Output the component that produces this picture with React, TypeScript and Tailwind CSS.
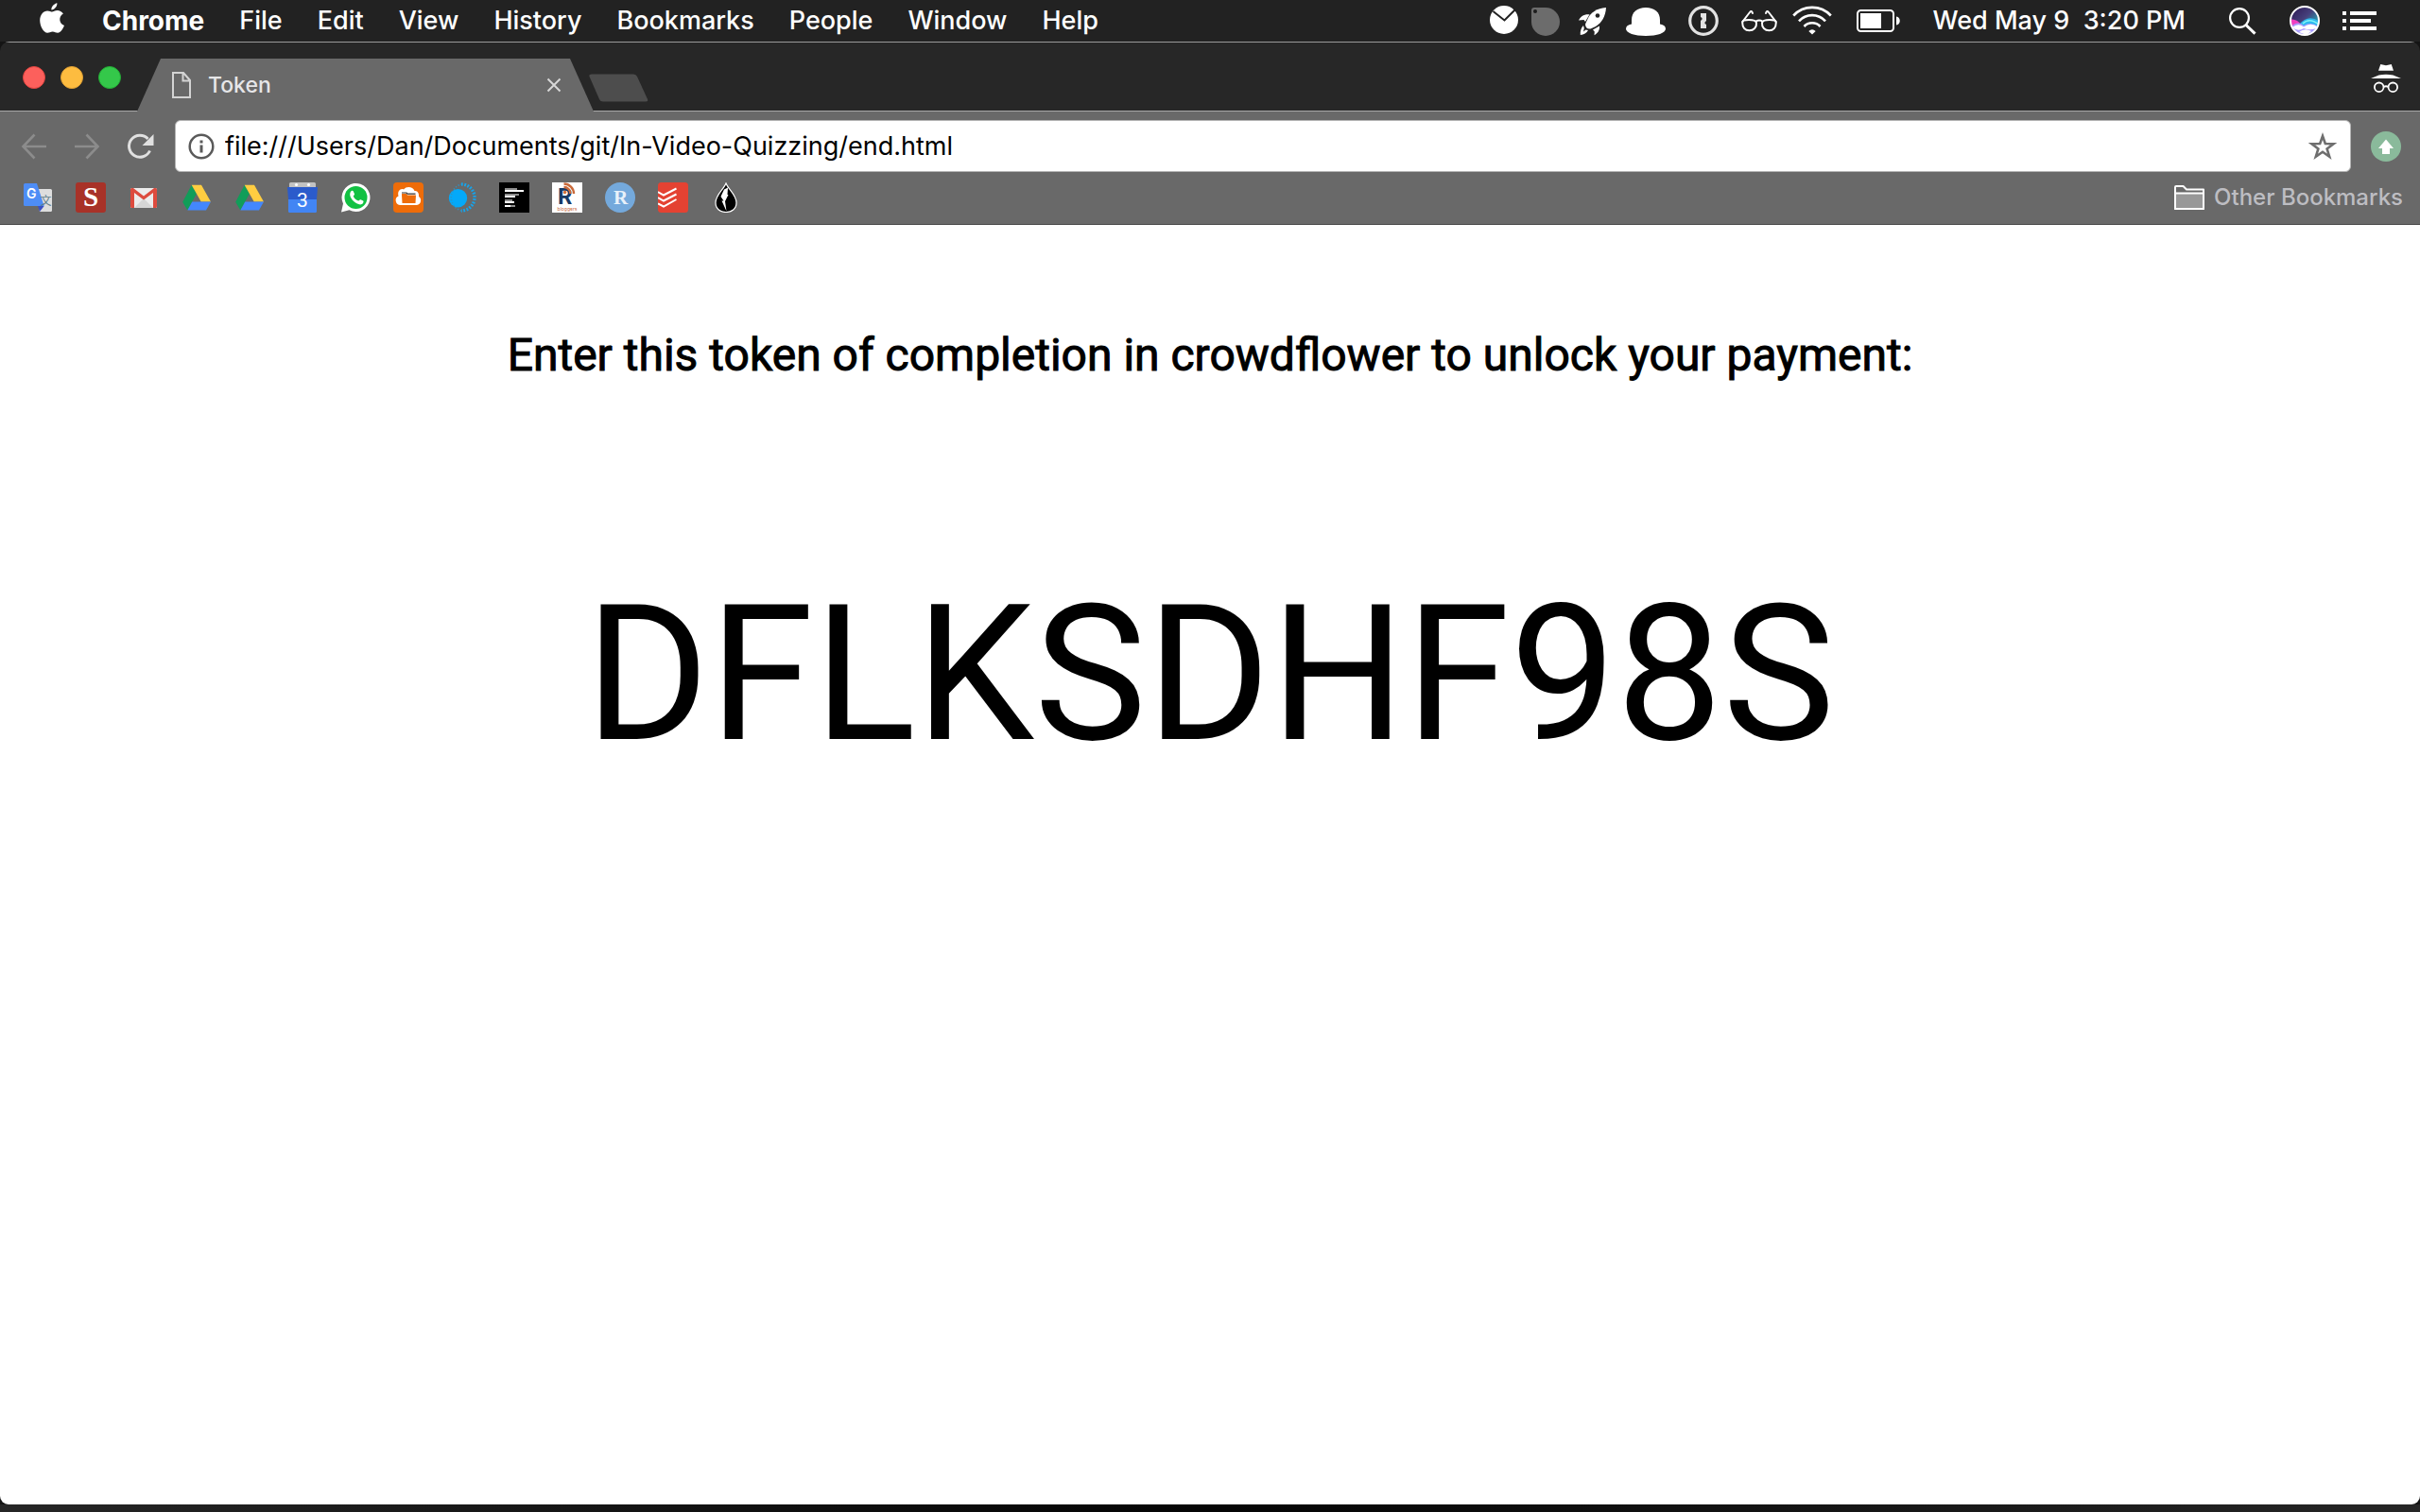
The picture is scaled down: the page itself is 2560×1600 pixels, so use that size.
import type { ReactNode } from "react";

const menus = ["File", "Edit", "View", "History", "Bookmarks", "People", "Window", "Help"];

function AppleLogo() {
  return (
    <svg viewBox="0 0 26 32" className="h-8 w-[26px]" fill="#fff" aria-hidden="true">
      <path d="M18.4 0.2c.3 3.300-2.800 7-6 7.200C12 4.200 15.200.700 18.400.200z" />
      <path d="M13 9.600c1.400 0 3-1.500 5.700-1.500 2.300 0 4.700 1.200 6.200 3.400-5.400 3.100-4.500 10.500 1.100 12.600-1.400 3.600-4 7.700-6.900 7.700-2.200 0-3-1.300-5.400-1.300-2.500 0-3.400 1.300-5.500 1.300C4.200 31.800.200 24.800.200 18.600c0-6.400 3.900-10.200 8-10.200 2.300 0 3.700 1.200 4.800 1.200z" />
    </svg>
  );
}

function StatusIcons() {
  return (
    <>
      <svg viewBox="0 0 30 32" className="h-8 w-[30px]" aria-hidden="true">
        <circle cx="15" cy="15" r="15" fill="#fff" />
        <path d="M3.500 6 15.500 15.500 26.500 4.500" fill="none" stroke="#222" strokeWidth="2" />
      </svg>
      <svg viewBox="0 0 30 32" className="ml-3.5 h-8 w-[30px]" aria-hidden="true">
        <path d="M3 2H15A15 15 0 1 1 0 17V5A3 3 0 0 1 3 2z" fill="#6c6c6c" />
        <circle cx="4" cy="6" r="2" fill="#1c1c1c" />
      </svg>
      <svg viewBox="0 0 30 32" className="ml-5 h-8 w-[30px]" fill="#fff" aria-hidden="true">
        <path d="M29 2C19 3 13 7 10 13L7 19.500C7 23 9 25 12.500 24.500L18 22C24.500 18 28.500 11 29 2z" />
        <circle cx="20" cy="10.500" r="2.300" fill="#222" />
        <path d="M0 15.500C2 11.500 5 8.800 11.500 9.200L7 17 5.500 15z" />
        <path d="M15 25.500 22 21.500C22.500 26 20 29.500 16.500 31.200L16.800 27.500z" />
        <path d="M5 21C2.500 23.500 1.500 27 1.800 31 5.500 30.500 8.500 29 10 26L7.500 25.500 5 27.500 5.800 24z" />
      </svg>
      <svg viewBox="0 0 42 32" className="ml-5 h-8 w-[42px]" fill="#fff" aria-hidden="true">
        <path d="M6 21V15C6 7 12 2 21 2S36 7 36 15V21z" />
        <path d="M6 19.500C2 20 0 22 0 24.500 0 29 9 32 21 32S42 29 42 24.500C42 22 40 20 36 19.500z" />
      </svg>
      <svg viewBox="0 0 32 32" className="ml-6 h-8 w-8" aria-hidden="true">
        <circle cx="16" cy="16" r="14.300" fill="none" stroke="#e2e2e2" strokeWidth="3.200" />
        <path d="M13 8h6v8l-1.500 1.500V19l1.500 1v4h-6v-8l1.500-1.500V13L13 12z" fill="#e2e2e2" />
      </svg>
      <svg viewBox="0 0 38 32" className="ml-6 h-8 w-[38px]" fill="none" stroke="#fff" strokeWidth="2" strokeLinecap="round" aria-hidden="true">
        <path d="M1.200 18C1.200 15.500 3 15 8 15S15.500 15.500 16 18C16.500 23 13 26.200 8.500 26.200S1.200 23 1.200 18z" />
        <path d="M36.800 18C36.800 15.500 35 15 30 15S22.500 15.500 22 18C21.500 23 25 26.200 29.500 26.200S36.800 23 36.800 18z" />
        <path d="M15.500 16.500Q19 14.500 22.500 16.500M1.300 17 9 7Q11 4.500 12 8M36.700 17 29 7Q27 4.500 26 8" />
      </svg>
      <svg viewBox="0 0 42 32" className="ml-4 h-8 w-[42px]" fill="none" stroke="#fff" strokeWidth="2.600" aria-hidden="true">
        <path d="M1.200 10.500A27 27 0 0 1 40.800 10.500M7 16.300A19 19 0 0 1 35 16.300M12.500 22A11.500 11.500 0 0 1 29.500 22" />
        <path d="M17.300 27Q21 23.500 24.700 27L21 30.500z" fill="#fff" stroke="none" />
      </svg>
      <svg viewBox="0 0 46 32" className="ml-[26px] h-8 w-[46px]" aria-hidden="true">
        <rect x="1" y="5" width="38" height="22" rx="3.500" fill="none" stroke="#fff" strokeWidth="2" />
        <rect x="4" y="8" width="22" height="16" fill="#fff" />
        <path d="M42 11.500C47 12 47 20 42 20.500z" fill="#fff" />
      </svg>
    </>
  );
}

function MenuBar() {
  return (
    <nav aria-label="Menu bar" className="flex h-11 items-center bg-[#222222] pr-[46px] pl-[42px] text-[27px] leading-8 font-medium text-white">
      <button aria-label="Apple menu" className="mb-1.5"><AppleLogo /></button>
      <div className="ml-10 flex items-center gap-[37px]">
        <button className="text-[28px] font-bold">Chrome</button>
        {menus.map((m) => (
          <button key={m}>{m}</button>
        ))}
      </div>
      <div className="ml-auto flex items-center">
        <StatusIcons />
        <span className="ml-[35px] whitespace-pre">Wed May 9  3:20 PM</span>
        <button aria-label="Search" className="ml-[46px]">
          <svg viewBox="0 0 29 32" className="h-8 w-[29px]" fill="none" stroke="#fff" aria-hidden="true">
            <circle cx="11" cy="13" r="9.900" strokeWidth="2.200" />
            <path d="M18 20.500 27.500 29.700" strokeWidth="3" />
          </svg>
        </button>
        <button aria-label="Siri" className="ml-[35px]">
          <svg viewBox="0 0 32 32" className="h-8 w-8" aria-hidden="true">
            <defs>
              <linearGradient id="siri" x1="0" y1="0" x2="1" y2="1">
                <stop offset="0" stopColor="#2b1650" />
                <stop offset=".45" stopColor="#46407c" />
                <stop offset=".7" stopColor="#2b8fa6" />
                <stop offset="1" stopColor="#3c6df0" />
              </linearGradient>
              <clipPath id="orb"><circle cx="16" cy="16" r="14.500" /></clipPath>
            </defs>
            <circle cx="16" cy="16" r="15" fill="url(#siri)" />
            <g clipPath="url(#orb)">
              <path d="M0 15Q7 13 13 21L8 28 0 26z" fill="#f03fc0" />
              <path d="M10 20Q20 8 32 17V26H12z" fill="#2fb9ee" />
              <path d="M14 19Q21 12 31 20" fill="none" stroke="#7ff3f5" strokeWidth="1.500" />
              <path d="M0 24Q8 15 15 21 23 16 32 23L26 32H6z" fill="#a99bff" />
              <path d="M3 23Q9 18 15 22.500 23 17 30 23 23 27 15 24 9 28 3 23z" fill="#fff" />
              <path d="M10 28Q16 23 23 27L18 31z" fill="#fff" />
            </g>
            <circle cx="16" cy="16" r="15" fill="none" stroke="#fff" strokeWidth="2" />
          </svg>
        </button>
        <button aria-label="Notification Center" className="ml-6">
          <svg viewBox="0 0 36 32" className="h-8 w-9" fill="#fff" aria-hidden="true">
            <path d="M0 6h4v4H0zM8 6h28v4H8zM0 14h4v4H0zM8 14h22v4H8zM0 22h4v4H0zM8 22h28v4H8z" />
          </svg>
        </button>
      </div>
    </nav>
  );
}

function TabStrip() {
  return (
    <header className="flex h-[74px] items-end border-t border-[#999999] bg-[#272727] shadow-[inset_0_-1px_0_#a8a8a8]">
      <div className="flex gap-4 self-center pl-6">
        <button aria-label="Close window" className="size-6 rounded-full border border-[#e2443f] bg-[#fc605c]" />
        <button aria-label="Minimize window" className="size-6 rounded-full border border-[#e0a033] bg-[#fdbc40]" />
        <button aria-label="Zoom window" className="size-6 rounded-full border border-[#24ab35] bg-[#34c84a]" />
      </div>
      <div className="ml-[17px] flex h-14 w-[483px] items-center bg-[#696969] pr-[34px] pl-[37px] [clip-path:polygon(25px_0,calc(100%-25px)_0,100%_100%,0_100%)]">
        <svg viewBox="0 0 20 28" className="h-7 w-5" fill="none" stroke="#d4d4d4" strokeWidth="2" aria-hidden="true">
          <path d="M1 1H12L19 9V27H1zM11.500 1V9.500H19" />
        </svg>
        <span className="ml-[18px] text-[23px] leading-7 font-medium text-[#e6e6e8]">Token</span>
        <button aria-label="Close tab" className="ml-auto">
          <svg viewBox="0 0 16 16" className="size-4" stroke="#d8d8d8" strokeWidth="2" aria-hidden="true">
            <path d="M1.500 1.500 14.500 14.500M14.500 1.500 1.500 14.500" />
          </svg>
        </button>
      </div>
      <button aria-label="New tab" className="mb-2.5 -ml-1.5">
        <svg viewBox="0 0 64 30" className="h-[30px] w-16" aria-hidden="true">
          <path d="M4 .5H48Q51 .5 52 3L63 27Q64 29.500 61 29.500H16Q13 29.500 12 27L1.500 3Q.5 .5 4 .5z" fill="#4d4d4d" />
        </svg>
      </button>
      <svg viewBox="0 0 32 30" className="mr-5 mb-5 ml-auto h-[30px] w-8" role="img" aria-label="Incognito">
        <path d="M10.300 0 16 1.200 21.700 0 24 6.800H8zM0 15 8.500 11.500Q16 10 23.500 11.500L32 15z" fill="#fff" />
        <g fill="none" stroke="#fff" strokeWidth="1.800">
          <circle cx="8.700" cy="24.300" r="4.800" />
          <circle cx="23.300" cy="24.300" r="4.800" />
          <path d="M13.500 24Q16 22.500 18.500 24" />
        </g>
      </svg>
    </header>
  );
}

function AddressRow() {
  return (
    <div className="flex items-center pr-5 pl-[22px]">
      <button aria-label="Back" disabled>
        <svg viewBox="0 0 28 28" className="size-7" fill="none" stroke="#8c8c8c" strokeWidth="2.600" aria-hidden="true">
          <path d="M14.500 1.500 2.500 14 14.500 26.500M2.500 14H27" />
        </svg>
      </button>
      <button aria-label="Forward" disabled className="ml-7">
        <svg viewBox="0 0 28 28" className="size-7" fill="none" stroke="#8c8c8c" strokeWidth="2.600" aria-hidden="true">
          <path d="M13.500 1.500 25.500 14 13.500 26.500M25.500 14H1" />
        </svg>
      </button>
      <button aria-label="Reload" className="ml-7">
        <svg viewBox="0 0 30 28" className="h-7 w-[30px]" fill="none" stroke="#e0e0e0" strokeWidth="3" aria-hidden="true">
          <path d="M24.500 18.500A11.500 11.500 0 1 1 22.500 6" />
          <path d="M28.500 1V13H16.500z" fill="#e0e0e0" stroke="none" />
        </svg>
      </button>
      <div className="ml-[21px] flex h-[55px] flex-1 items-center rounded-md border border-[#b4b4b4] bg-white pr-[14px] pl-[13px]">
        <svg viewBox="0 0 28 28" className="size-7" aria-hidden="true">
          <circle cx="14" cy="14" r="12.300" fill="none" stroke="#5a5a5a" strokeWidth="2.500" />
          <path d="M12.500 12.500h3v8h-3zM12.500 7.500h3v3h-3z" fill="#5a5a5a" />
        </svg>
        <input
          aria-label="Address"
          defaultValue="file:///Users/Dan/Documents/git/In-Video-Quizzing/end.html"
          className="ml-[11px] min-w-0 flex-1 bg-transparent text-[27px] leading-8 text-black outline-none"
        />
        <button aria-label="Bookmark this page">
          <svg viewBox="0 0 30 30" className="size-[30px]" fill="none" stroke="#6e6e6e" strokeWidth="2.600" aria-hidden="true">
            <path d="M15 4 17.800 12 26.500 12.200 19.600 17.400 22.200 25.700 15 20.800 7.800 25.700 10.400 17.400 3.500 12.200 12.200 12z" />
          </svg>
        </button>
      </div>
      <button aria-label="Update available" className="ml-[21px]">
        <svg viewBox="0 0 32 32" className="size-8" aria-hidden="true">
          <circle cx="16" cy="16" r="16" fill="#8aba9b" />
          <path d="M16 8.500 24 18H20V24H12V18H8z" fill="#fff" />
        </svg>
      </button>
    </div>
  );
}

const driveIcon = (
  <>
    <path d="M10.700 2.700 15.900 12 6.300 29.500 1.200 20.700z" fill="#119d59" />
    <path d="M10.700 2.700H21L31 20.500H20.700z" fill="#ffcd41" />
    <path d="M11.300 20.500H31L26 29.500H6.300z" fill="#4387fd" />
  </>
);

const bookmarks: { name: string; art: ReactNode }[] = [
  {
    name: "Google Translate",
    art: (
      <>
        <path d="M14 7H29.500Q31 7 31 8.500V29.500Q31 31 29.500 31H18z" fill="#dedede" />
        <path d="M16 25H22.700L18 31z" fill="#3a4fc4" />
        <path d="M2.500 1H15L22.700 25H2.500Q1 25 1 23.500V2.500Q1 1 2.500 1z" fill="#4e8df6" />
        <text x="4" y="17" fontSize="14" fontWeight="600" fill="#fff" fontFamily="Inter">G</text>
        <text x="18.500" y="24" fontSize="12" fill="#607d8b" fontFamily="Noto Sans CJK SC">文</text>
      </>
    ),
  },
  {
    name: "Slader",
    art: (
      <>
        <rect width="32" height="32" rx="3" fill="#a83228" />
        <text x="16" y="25" textAnchor="middle" fontSize="29" fontWeight="700" fill="#fff" fontFamily="Liberation Serif">S</text>
      </>
    ),
  },
  {
    name: "Gmail",
    art: (
      <>
        <rect x="2" y="6" width="28" height="21" rx="1.500" fill="#ececec" />
        <path d="M6 27 16 17 26 27z" fill="#d6d6d6" />
        <path d="M2 7.500Q2 6 3.500 6H5L16 14.500 27 6H28.500Q30 6 30 7.500V25.500Q30 27 28.500 27H26V11L16 18.500 6 11V27H3.500Q2 27 2 25.500z" fill="#dd4b3e" />
      </>
    ),
  },
  { name: "Google Drive", art: driveIcon },
  { name: "My Drive", art: driveIcon },
  {
    name: "Google Calendar",
    art: (
      <>
        <path d="M2 1.500Q2 0 3.500 0H28.500Q30 0 30 1.500V6H2z" fill="#c2c2c2" />
        <circle cx="9.500" cy="2.500" r="1.600" fill="#fff" />
        <circle cx="22.500" cy="2.500" r="1.600" fill="#fff" />
        <path d="M1 18H31V30.500Q31 32 29.500 32H2.500Q1 32 1 30.500z" fill="#4285f4" />
        <path d="M0 5H32L31 18H1z" fill="#2b5bcb" />
        <text x="16" y="25.500" textAnchor="middle" fontSize="21" fill="#fff" fontFamily="Roboto">3</text>
      </>
    ),
  },
  {
    name: "WhatsApp",
    art: (
      <>
        <path d="M1 31.500 3 22.500A15 15 0 1 1 9.500 29.200z" fill="#fff" />
        <circle cx="16.500" cy="16" r="12" fill="#12c143" />
        <path d="M11.500 9.200C12.300 8.500 13.500 8.700 13.800 9.500L15 12.300C15.200 13.200 14 14 13.800 14.700 15 17.200 16.600 18.600 19.200 19.600 20 19.200 20.600 17.900 21.500 18.200L24.200 19.500C25.200 20.200 24 22.500 22.800 23.100 20 24.200 16.500 22.300 14.200 20.100 11.300 17.300 8.500 12.500 11.500 9.200z" fill="#fff" />
      </>
    ),
  },
  {
    name: "Cloud storage",
    art: (
      <>
        <rect width="32" height="32" rx="4" fill="#ee6c09" />
        <path d="M8 24A5 5 0 0 1 5.500 14.500C4 9 8 6 11 7.500 14 3.500 21 4.500 22.500 9 26 8.500 27.500 12 27 15A5 5 0 0 1 25 24z" fill="#fff" />
        <path d="M9 13.500V12H14L15 13.500H24L23.500 22H9.500z" fill="#ee6c09" />
        <path d="M9 11H14L15 12.200H23.500" fill="none" stroke="#333" strokeWidth="1.200" />
      </>
    ),
  },
  {
    name: "Sun",
    art: (
      <>
        <circle cx="12.500" cy="16.700" r="9.700" fill="#04a9f9" />
        <path d="M16 2A14 14 0 0 1 16 30" fill="none" stroke="#16a3ea" strokeWidth="3.400" strokeDasharray="1.800 1.500" />
        <path d="M16 30A14.500 14.500 0 0 1 16 2" fill="none" stroke="#2f93c4" strokeWidth="1.600" strokeDasharray="1.200 1.900" />
      </>
    ),
  },
  {
    name: "Reader",
    art: (
      <>
        <rect width="32" height="32" fill="#000" />
        <path d="M6 6h13v2H6zM6 12h15v2H6zM6 18h8v2H6zM6 24h11v2H6z" fill="#8f8f8f" />
        <path d="M6 8h20v2H6zM6 14h11v2H6zM6 20h10v2H6zM6 24h6v2H6z" fill="#fff" />
      </>
    ),
  },
  {
    name: "R-bloggers",
    art: (
      <>
        <rect width="32" height="32" fill="#fff" />
        <text x="6" y="23" fontSize="24" fontWeight="700" fill="#173a66" fontFamily="Roboto">R</text>
        <path d="M12.500 5A7 7 0 0 1 19.500 12M12.500 1.500A10.500 10.500 0 0 1 23 12" fill="none" stroke="#c9693a" strokeWidth="2.400" />
        <circle cx="13.500" cy="10.500" r="1.800" fill="#d5703a" />
        <text x="16" y="30" textAnchor="middle" fontSize="5" fill="#c9693a" fontFamily="Inter">bloggers</text>
      </>
    ),
  },
  {
    name: "RStudio",
    art: (
      <>
        <circle cx="16" cy="16" r="16" fill="#74a9dc" />
        <text x="16.500" y="23" textAnchor="middle" fontSize="21" fontWeight="700" fill="#e8f1fa" fontFamily="Liberation Serif">R</text>
      </>
    ),
  },
  {
    name: "Todoist",
    art: (
      <>
        <rect width="32" height="32" rx="3.500" fill="#e44232" />
        <path d="M0 10 6 13.500 19.500 6.500M0 16 6 19.500 19.500 12.500M0 22.500 6 25.500 19.500 18" fill="none" stroke="#fff" strokeWidth="2" />
      </>
    ),
  },
  {
    name: "Blackdrop",
    art: (
      <>
        <path d="M16 1C18 7 27 13 27 21.500 27 28 22 31.500 16 31.500S5 28 5 21.500C5 13 14 7 16 1z" fill="#000" stroke="#fff" strokeWidth="1.200" />
        <path d="M14 7.500 18 5.500 17.500 13H18.500L15 20 16.500 30.500 11.500 19.500H13.500L10.500 15z" fill="#fff" />
      </>
    ),
  },
];

function BookmarksBar() {
  return (
    <div className="mt-[11px] flex items-center justify-between pr-[18px] pl-6">
      <div className="flex gap-6">
        {bookmarks.map((b) => (
          <a key={b.name} href="#" aria-label={b.name}>
            <svg viewBox="0 0 32 32" className="size-8" aria-hidden="true">{b.art}</svg>
          </a>
        ))}
      </div>
      <button className="flex items-center gap-2.5 text-[24px] leading-8 font-medium text-[#bdbdc2]">
        <svg viewBox="0 0 32 26" className="h-[26px] w-8" stroke="#fff" strokeWidth="2" strokeLinejoin="round" aria-hidden="true">
          <path d="M1 25V2Q1 1 2 1H9.500L13 4.500H31V25z" fill="#6a6a6a" />
          <path d="M1 8.500H31V25H1z" fill="#989898" />
        </svg>
        Other Bookmarks
      </button>
    </div>
  );
}

export default function App() {
  return (
    <div className="flex min-h-screen flex-col bg-[#141414] [font-family:Inter,sans-serif]">
      <MenuBar />
      <div className="flex flex-1 flex-col overflow-hidden rounded-t-[10px] rounded-b-[9px]">
        <TabStrip />
        <div className="border-b border-[#484848] bg-[#696969] pt-[9px] pb-3">
          <AddressRow />
          <BookmarksBar />
        </div>
        <main className="flex-1 bg-white pt-[110px] text-center text-black [font-family:Roboto,sans-serif]">
          <h1 className="text-[48px] leading-14 font-normal [-webkit-text-stroke:1px_black]">
            Enter this token of completion in crowdflower to unlock your payment:
          </h1>
          <p className="mt-[193px] text-[200px] leading-[234px]">DFLKSDHF98S</p>
        </main>
      </div>
      <div className="h-2 bg-linear-to-r from-[#262626] via-[#050505] to-[#262626]" />
    </div>
  );
}
